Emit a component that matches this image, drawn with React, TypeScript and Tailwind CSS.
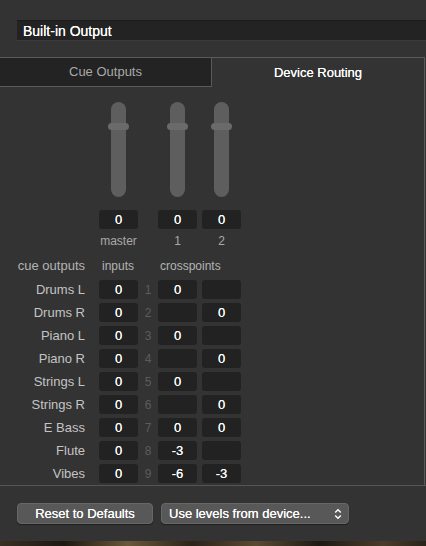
import React from "react";

const rows: [string, string, string, string][] = [
  ["Drums L", "0", "0", ""],
  ["Drums R", "0", "", "0"],
  ["Piano L", "0", "0", ""],
  ["Piano R", "0", "", "0"],
  ["Strings L", "0", "0", ""],
  ["Strings R", "0", "", "0"],
  ["E Bass", "0", "0", "0"],
  ["Flute", "0", "-3", ""],
  ["Vibes", "0", "-6", "-3"],
];

function Box({ v }: { v: string }) {
  return (
    <div className="w-[39px] h-[19px] rounded-[3px] bg-[#222222] text-white text-[13px] leading-[19px] text-center [text-shadow:0_0_0.5px_#ffffff]">
      {v}
    </div>
  );
}

function Slider() {
  return (
    <div className="w-[39px] flex justify-center">
      <div className="relative w-[15px] h-[95px] rounded-full bg-[#5e5e5e]">
        <div className="absolute left-[-3px] top-[21px] w-[21px] h-[7px] rounded-full bg-[#6a6a6a]" />
      </div>
    </div>
  );
}

export default function App() {
  return (
    <div className="w-[426px] h-[546px] bg-[#333333] overflow-hidden flex flex-col font-['Liberation_Sans',Arial,sans-serif]">
      <div className="h-[541px] flex flex-col">
        <div className="pt-[20px] pl-[17px]">
          <div className="h-[21px] bg-[#232323] border-t border-t-[#1b1b1b] border-b border-b-[#3b3b3b] pl-[6px] text-white text-[14px] leading-[20px] [text-shadow:0_0_0.5px_#ffffff]">
            Built-in Output
          </div>
        </div>
        <div className="mt-[16px] flex h-[30px] w-[425px]">
          <div className="w-[212px] bg-[#232323] border-t border-b border-r border-[#5a5a5a] text-[#a9a9a9] text-[13px] flex items-center justify-center">
            Cue Outputs
          </div>
          <div className="flex-1 border-t border-r border-[#5a5a5a] text-white text-[13px] flex items-center justify-center [text-shadow:0_0_0.5px_#ffffff]">
            Device Routing
          </div>
        </div>
        <div className="w-[425px] border-r border-[#5a5a5a] pt-[15px] flex flex-col">
          <div className="flex">
            <div className="w-[99px]" />
            <Slider />
            <div className="w-[20px]" />
            <Slider />
            <div className="w-[5px]" />
            <Slider />
          </div>
          <div className="flex mt-[13px]">
            <div className="w-[99px]" />
            <Box v="0" />
            <div className="w-[20px]" />
            <Box v="0" />
            <div className="w-[5px]" />
            <Box v="0" />
          </div>
          <div className="flex mt-[6px] h-[13px] text-[12px] leading-[13px] text-[#a9a9a9]">
            <div className="w-[99px]" />
            <div className="w-[39px] text-center">master</div>
            <div className="w-[20px]" />
            <div className="w-[39px] text-center">1</div>
            <div className="w-[5px]" />
            <div className="w-[39px] text-center">2</div>
          </div>
          <div className="flex mt-[11px] h-[14px] text-[12px] leading-[14px] text-[#b3b3b3]">
            <div className="w-[85px] text-right text-[13px]">cue outputs</div>
            <div className="w-[17px]" />
            <div className="w-[56px]">inputs</div>
            <div className="pl-[2px]">crosspoints</div>
          </div>
          <div className="flex flex-col gap-[4px] mt-[7px]">
            {rows.map((r, i) => (
              <div key={r[0]} className="flex h-[19px] items-center">
                <div className="w-[85px] text-right text-[13px] text-[#c4c4c4]">{r[0]}</div>
                <div className="w-[14px]" />
                <Box v={r[1]} />
                <div className="w-[20px] text-center text-[12px] text-[#5c5c5c]">{i + 1}</div>
                <Box v={r[2]} />
                <div className="w-[5px]" />
                <Box v={r[3]} />
              </div>
            ))}
          </div>
          <div className="h-[2px]" />
        </div>
        <div className="h-px w-full bg-[#555555]" />
        <div className="flex mt-[17px] pl-[17px] gap-[8px]">
          <div className="w-[136px] h-[21px] rounded-[4px] bg-[#585858] border border-[#676767] shadow-[0_1px_1px_rgba(0,0,0,0.4)] text-white text-[13px] leading-[19px] text-center [text-shadow:0_0_0.5px_#ffffff]">
            Reset to Defaults
          </div>
          <div className="w-[188px] h-[21px] rounded-[4px] bg-[#585858] border border-[#676767] shadow-[0_1px_1px_rgba(0,0,0,0.4)] text-white text-[13px] leading-[19px] flex items-center pl-[7px] pr-[4px] [text-shadow:0_0_0.5px_#ffffff]">
            <span className="flex-1">Use levels from device...</span>
            <svg width="8" height="12" viewBox="0 0 8 12" className="mr-[2px]">
              <path d="M1.2 4.5 L4 1.7 L6.8 4.5" stroke="#ffffff" strokeWidth="1.4" fill="none" />
              <path d="M1.2 7.5 L4 10.3 L6.8 7.5" stroke="#ffffff" strokeWidth="1.4" fill="none" />
            </svg>
          </div>
        </div>
      </div>
      <div className="h-[5px] bg-[linear-gradient(90deg,#3a2f22,#1e1812_15%,#6a5838_30%,#2b2219_45%,#5a4a32_60%,#1f1913_75%,#4a3c2a_90%,#2a2118)]" />
    </div>
  );
}
